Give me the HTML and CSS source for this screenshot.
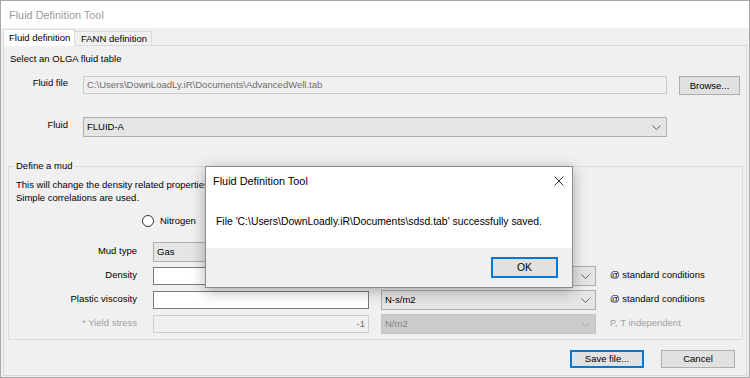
FILE: index.html
```html
<!DOCTYPE html>
<html>
<head>
    <title>Fluid Definition Tool</title>
    <link rel="stylesheet" href="styles.css">
</head>
<body>
    <div class="window">
        <div class="titlebar">Fluid Definition Tool</div>
        <div class="client">
            <div class="tabs">
                <div class="tab active">Fluid definition</div>
                <div class="tab">FANN definition</div>
            </div>
            <div class="tabpage">
                <div class="caption">Select an OLGA fluid table</div>

                <div class="row row-file">
                    <span class="lbl">Fluid file</span>
                    <div class="textbox disabled path">C:\Users\DownLoadLy.iR\Documents\AdvancedWell.tab</div>
                    <button class="button browse">Browse...</button>
                </div>

                <div class="row row-fluid">
                    <span class="lbl">Fluid</span>
                    <div class="combo path">
                        <span>FLUID-A</span>
                        <svg class="chevron" width="9" height="5" viewBox="0 0 9 5"><polyline points="0.5,0.5 4.5,4.5 8.5,0.5"/></svg>
                    </div>
                </div>

                <fieldset class="group">
                    <legend>Define a mud</legend>
                    <p class="desc">This will change the density related properties<br>Simple correlations are used.</p>
                    <div class="radio-row"><span class="radio"></span>Nitrogen</div>

                    <div class="mud-row">
                        <span class="mud-lbl">Mud type</span>
                        <div class="combo field">
                            <span>Gas</span>
                            <svg class="chevron" width="9" height="5" viewBox="0 0 9 5"><polyline points="0.5,0.5 4.5,4.5 8.5,0.5"/></svg>
                        </div>
                    </div>
                    <div class="mud-row">
                        <span class="mud-lbl">Density</span>
                        <div class="textbox field"></div>
                        <div class="combo unit">
                            <span>kg/m3</span>
                            <svg class="chevron" width="9" height="5" viewBox="0 0 9 5"><polyline points="0.5,0.5 4.5,4.5 8.5,0.5"/></svg>
                        </div>
                        <span class="note">@ standard conditions</span>
                    </div>
                    <div class="mud-row">
                        <span class="mud-lbl">Plastic viscosity</span>
                        <div class="textbox field"></div>
                        <div class="combo unit">
                            <span>N-s/m2</span>
                            <svg class="chevron" width="9" height="5" viewBox="0 0 9 5"><polyline points="0.5,0.5 4.5,4.5 8.5,0.5"/></svg>
                        </div>
                        <span class="note">@ standard conditions</span>
                    </div>
                    <div class="mud-row">
                        <span class="mud-lbl grey">* Yield stress</span>
                        <div class="textbox disabled field num">-1</div>
                        <div class="combo disabled unit">
                            <span>N/m2</span>
                            <svg class="chevron" width="9" height="5" viewBox="0 0 9 5"><polyline points="0.5,0.5 4.5,4.5 8.5,0.5"/></svg>
                        </div>
                        <span class="note grey">P, T independent</span>
                    </div>
                </fieldset>

                <div class="actions">
                    <button class="button default">Save file...</button>
                    <button class="button">Cancel</button>
                </div>
            </div>
        </div>

        <div class="dialog">
            <div class="dlg-body">
                <div class="dlg-title">
                    <span>Fluid Definition Tool</span>
                    <svg width="10" height="10" viewBox="0 0 10 10"><path d="M0.5 0.5 L9.5 9.5 M9.5 0.5 L0.5 9.5"/></svg>
                </div>
                <div class="dlg-msg">File 'C:\Users\DownLoadly.iR\Documents\sdsd.tab' successfully saved.</div>
            </div>
            <div class="dlg-foot">
                <button class="button default ok">OK</button>
            </div>
        </div>
    </div>
</body>
</html>
```

FILE: styles.css
```css
* {
    box-sizing: border-box;
}
body {
    margin: 0;
    font-family: "Liberation Sans", Arial, sans-serif;
    font-size: 9.5px;
    line-height: 12px;
    color: #000;
    background: #fff;
}
.window {
    position: relative;
    width: 750px;
    height: 378px;
    border: 1px solid #a8a8a8;
    background: #f0f0f0;
    display: flex;
    flex-direction: column;
}
.titlebar {
    height: 27px;
    background: #fff;
    color: #9b9b9b;
    font-size: 10.9px;
    line-height: 29px;
    padding-left: 8px;
}
.client {
    flex: 1;
    display: flex;
    flex-direction: column;
    padding: 0 2px 1px 2px;
}

/* tabs */
.tabs {
    height: 17px;
    display: flex;
    align-items: flex-end;
}
.tab {
    height: 14px;
    width: 77px;
    border: 1px solid #d9d9d9;
    border-left: none;
    border-bottom: none;
    line-height: 13px;
    padding-left: 6px;
}
.tab.active {
    position: relative;
    z-index: 1;
    height: 17px;
    width: 72px;
    margin-bottom: -1px;
    border-left: 1px solid #d9d9d9;
    background: #fff;
    line-height: 15px;
    padding-left: 5px;
}
.tabpage {
    flex: 1;
    border: 1px solid #d9d9d9;
    display: flex;
    flex-direction: column;
}
.caption {
    margin: 7px 0 0 6px;
}

/* top rows */
.row {
    display: flex;
    align-items: flex-start;
}
.lbl {
    width: 64px;
    text-align: right;
}
.row-file {
    margin-top: 11px;
}
.row-file .lbl {
    margin-top: 1px;
}
.row-fluid {
    margin-top: 22px;
}
.row-fluid .lbl {
    margin-top: 2px;
}
.path {
    margin-left: 15px;
    width: 584px;
}

/* inputs */
.textbox {
    height: 18px;
    border: 1px solid #7a7a7a;
    background: #fff;
    padding: 0 3px;
    line-height: 16px;
    white-space: nowrap;
    overflow: hidden;
}
.textbox.disabled {
    background: #f0f0f0;
    border-color: #cccccc;
    color: #6d6d6d;
}
.num {
    text-align: right;
}
.combo {
    height: 20px;
    border: 1px solid #adadad;
    background: #e5e5e5;
    display: flex;
    align-items: center;
    justify-content: space-between;
    padding: 0 5px 0 3px;
}
.combo.disabled {
    background: #cccccc;
    border-color: #c4c4c4;
    color: #838383;
}
.chevron polyline {
    fill: none;
    stroke: #606060;
    stroke-width: 1;
}
.combo.disabled .chevron polyline {
    stroke: #a6a6a6;
}
.button {
    font: inherit;
    color: #000;
    height: 20px;
    padding: 0;
    border: 1px solid #adadad;
    background: #e1e1e1;
}
.button.default {
    border-color: #0078d7;
    box-shadow: inset 0 0 0 1px #0078d7;
}
.browse {
    margin-left: 12px;
    width: 61px;
    height: 19px;
}

/* mud group */
.group {
    margin: 23px 3px 0 4px;
    padding: 0 5px 5px 5px;
    border: 1px solid #dcdcdc;
    min-width: 0;
}
.group legend {
    padding: 0 2px;
    line-height: 12px;
}
.desc {
    width: 190px;
    overflow: hidden;
    margin: 6px 0 0 2px;
    line-height: 13px;
    white-space: nowrap;
}
.radio-row {
    display: flex;
    align-items: center;
    margin: 10px 0 0 128px;
    height: 13px;
}
.radio {
    width: 12px;
    height: 12px;
    border: 1px solid #333;
    border-radius: 50%;
    background: #fff;
    margin-right: 6px;
}
.mud-row {
    display: flex;
    align-items: center;
    height: 20px;
    margin-top: 4px;
}
.radio-row + .mud-row {
    margin-top: 15px;
}
.mud-lbl {
    width: 123px;
    text-align: right;
    margin-top: -2px;
}
.field {
    margin-left: 16px;
    width: 216px;
}
.unit {
    margin-left: 12px;
    width: 215px;
}
.note {
    margin-left: 14px;
    margin-top: -2px;
}
.grey {
    color: #a0a0a0;
}
.actions {
    display: flex;
    justify-content: flex-end;
    gap: 17px;
    margin-top: 10px;
    padding-right: 11px;
}
.actions .button {
    width: 74px;
    height: 18px;
}

/* message box */
.dialog {
    position: absolute;
    left: 204px;
    top: 165px;
    width: 368px;
    height: 122px;
    border: 1px solid #8c8c8c;
    background: #f0f0f0;
    box-shadow: 0 3px 14px rgba(0, 0, 0, 0.3);
    font-size: 10.4px;
    display: flex;
    flex-direction: column;
}
.dlg-body {
    height: 81px;
    background: #fff;
}
.dlg-title {
    display: flex;
    justify-content: space-between;
    align-items: center;
    padding: 7px 8px 0 7px;
    font-size: 10.9px;
    line-height: 14px;
}
.dlg-title path {
    stroke: #333;
    stroke-width: 1;
    fill: none;
}
.dlg-msg {
    margin-top: 27px;
    padding-left: 10px;
    line-height: 14px;
    white-space: nowrap;
}
.dlg-foot {
    flex: 1;
    display: flex;
    justify-content: flex-end;
    align-items: flex-start;
    padding: 9px 14px 0 0;
}
.ok {
    width: 67px;
    height: 21px;
    font-size: 10.4px;
}
```
